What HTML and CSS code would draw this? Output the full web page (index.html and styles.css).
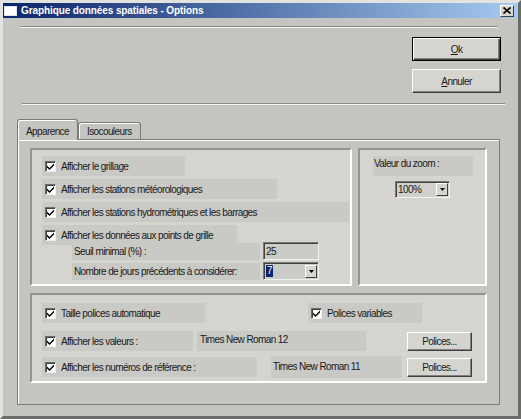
FILE: index.html
```html
<!DOCTYPE html>
<html lang="fr">
<head>
  <meta charset="UTF-8" />
  <title>Graphique données spatiales - Options</title>
  <link rel="stylesheet" href="styles.css">
</head>
<body>
  <div class="window">
    <div class="titlebar">
      <svg class="app-icon" width="13" height="10" viewBox="0 0 13 10">
        <rect x="0.5" y="0.5" width="12" height="9" fill="#fff" stroke="#dfe6f3"/>
      </svg>
      <span class="title">Graphique données spatiales - Options</span>
      <span class="close">
        <svg width="8" height="7" viewBox="0 0 8 7">
          <path d="M0.5 0.5 L7.5 6.5 M7.5 0.5 L0.5 6.5" stroke="#000" stroke-width="1.6"/>
        </svg>
      </span>
    </div>

    <div class="content">
      <div class="groove groove-top"></div>

      <div class="actions">
        <button class="btn btn-default"><u>O</u>k</button>
        <button class="btn"><u>A</u>nnuler</button>
      </div>

      <div class="groove groove-bottom"></div>

      <div class="tabs">
        <div class="tab active">Apparence</div>
        <div class="tab">Isocouleurs</div>
      </div>

      <div class="tab-panel">
        <div class="top-row">
          <div class="group group-display">
            <div class="check w-143"><span class="box"><svg viewBox="0 0 7 7"><polygon points="0,2.5 2.5,5 7,0.5 7,2.5 2.5,7 0,4.5"/></svg></span>Afficher le grillage</div>
            <div class="check w-235"><span class="box"><svg viewBox="0 0 7 7"><polygon points="0,2.5 2.5,5 7,0.5 7,2.5 2.5,7 0,4.5"/></svg></span>Afficher les stations météorologiques</div>
            <div class="check w-307"><span class="box"><svg viewBox="0 0 7 7"><polygon points="0,2.5 2.5,5 7,0.5 7,2.5 2.5,7 0,4.5"/></svg></span>Afficher les stations hydrométriques et les barrages</div>
            <div class="check w-195"><span class="box"><svg viewBox="0 0 7 7"><polygon points="0,2.5 2.5,5 7,0.5 7,2.5 2.5,7 0,4.5"/></svg></span>Afficher les données aux points de grille</div>

            <div class="fields">
              <span class="field-label">Seuil minimal (%) :</span>
              <span class="textbox">25</span>
              <span class="field-label">Nombre de jours précédents à considérer:</span>
              <span class="combo combo-days"><span class="selected">7</span><span class="drop"></span></span>
            </div>
          </div>

          <div class="group group-zoom">
            <div class="label-box">Valeur du zoom :</div>
            <span class="combo combo-zoom"><span class="value">100%</span><span class="drop"></span></span>
          </div>
        </div>

        <div class="group group-fonts">
          <div class="font-row row-1">
            <div class="check w-163"><span class="box"><svg viewBox="0 0 7 7"><polygon points="0,2.5 2.5,5 7,0.5 7,2.5 2.5,7 0,4.5"/></svg></span>Taille polices automatique</div>
            <div class="check w-114 push-103"><span class="box"><svg viewBox="0 0 7 7"><polygon points="0,2.5 2.5,5 7,0.5 7,2.5 2.5,7 0,4.5"/></svg></span>Polices variables</div>
          </div>
          <div class="font-row row-2">
            <div class="check w-151"><span class="box"><svg viewBox="0 0 7 7"><polygon points="0,2.5 2.5,5 7,0.5 7,2.5 2.5,7 0,4.5"/></svg></span>Afficher les valeurs :</div>
            <div class="font-name fn-values">Times New Roman 12</div>
            <button class="btn btn-small">Polices...</button>
          </div>
          <div class="font-row row-3">
            <div class="check w-215"><span class="box"><svg viewBox="0 0 7 7"><polygon points="0,2.5 2.5,5 7,0.5 7,2.5 2.5,7 0,4.5"/></svg></span>Afficher les numéros de référence :</div>
            <div class="font-name fn-refs">Times New Roman 11</div>
            <button class="btn btn-small">Polices...</button>
          </div>
        </div>
      </div>
    </div>
  </div>
</body>
</html>
```

FILE: styles.css
```css
:root {
  --bg: #c4c4c0;
  --face: #d6d4cf;
  --label: #c9c9c5;
  --shadow: #808080;
  --dark: #404040;
  --light: #ffffff;
}

body {
  margin: 0;
  font-family: "Liberation Sans", Arial, sans-serif;
  font-size: 10px;
  letter-spacing: -0.6px;
  color: #1a1a1a;
  background: var(--bg);
}

.window {
  box-sizing: border-box;
  width: 521px;
  height: 419px;
  background: var(--bg);
  border: 3px solid;
  border-color: #e2e2de #6a6a68 #6a6a68 #e2e2de;
}

/* title bar */
.titlebar {
  display: flex;
  align-items: center;
  height: 15px;
  background: linear-gradient(to right, #0a246a, #a6caf0);
}

.app-icon {
  margin-left: 1px;
  flex: none;
}

.title {
  flex: 1;
  margin-left: 4px;
  color: #fff;
  font-weight: bold;
  font-size: 10px;
  letter-spacing: -0.1px;
  white-space: nowrap;
}

.close {
  display: flex;
  align-items: center;
  justify-content: center;
  box-sizing: border-box;
  width: 14px;
  height: 12px;
  margin-right: 4px;
  background: var(--face);
  border: 1px solid;
  border-color: var(--light) var(--dark) var(--dark) var(--light);
}

/* separators and main buttons */
.groove {
  height: 0;
  border-top: 1px solid #8a8a86;
  border-bottom: 1px solid #f4f4f2;
}

.groove-top {
  margin: 8px 0 0 17px;
  width: 478px;
}

.groove-bottom {
  margin: 10px 0 0 19px;
  width: 483px;
}

.actions {
  display: flex;
  flex-direction: column;
  gap: 8px;
  margin: 9px 0 0 409px;
}

.btn {
  box-sizing: border-box;
  width: 89px;
  height: 24px;
  padding: 0;
  font: inherit;
  letter-spacing: inherit;
  color: #1a1a1a;
  background: var(--face);
  border: 1px solid;
  border-color: var(--light) var(--dark) var(--dark) var(--light);
  box-shadow: inset -1px -1px var(--shadow);
}

.btn-default {
  border: 1px solid #000;
  box-shadow: inset 1px 1px var(--light), inset -1px -1px var(--dark), inset -2px -2px var(--shadow);
}

.btn u {
  text-underline-offset: 1px;
}

/* tabs */
.tabs {
  display: flex;
  align-items: flex-end;
  height: 20px;
  margin: 14px 0 0 14px;
}

.tab {
  box-sizing: border-box;
  height: 17px;
  padding: 2px 8px 0 8px;
  background: var(--bg);
  border: 1px solid #7a7a7a;
  border-bottom: none;
  border-radius: 3px 3px 0 0;
  box-shadow: inset 1px 1px var(--light);
  line-height: 13px;
}

.tab.active {
  position: relative;
  z-index: 1;
  width: 61px;
  height: 21px;
  margin-bottom: -1px;
  padding: 5px 0 0 8px;
}

.tab-panel {
  box-sizing: border-box;
  width: 483px;
  height: 266px;
  margin-left: 14px;
  padding: 8px 12px;
  border: 1px solid #7a7a7a;
  box-shadow: inset 1px 1px var(--light);
}

.top-row {
  display: flex;
  gap: 6px;
}

/* sunken group boxes */
.group {
  box-sizing: border-box;
  background: var(--face);
  border: 2px solid;
  border-color: #939390 var(--light) var(--light) #939390;
}

.group-display {
  width: 322px;
  height: 138px;
  padding: 3px 0 0 10px;
}

.group-zoom {
  width: 129px;
  height: 138px;
  padding: 6px 0 0 13px;
}

.group-fonts {
  width: 457px;
  height: 90px;
  margin-top: 7px;
  padding: 0 0 0 10px;
}

.check {
  box-sizing: border-box;
  display: flex;
  align-items: center;
  height: 20px;
  margin-top: 3px;
  padding-left: 3px;
  background: var(--label);
  white-space: nowrap;
}

.box {
  display: flex;
  align-items: center;
  justify-content: center;
  flex: none;
  box-sizing: border-box;
  width: 11px;
  height: 11px;
  margin-right: 5px;
  background: #fff;
  border: 1px solid;
  border-color: #6c6c6c #f0f0f0 #f0f0f0 #6c6c6c;
  box-shadow: inset 1px 1px #404040;
}

.box svg {
  width: 7px;
  height: 7px;
  fill: #000;
}

.w-143 { width: 143px; }
.w-235 { width: 235px; }
.w-307 { width: 307px; }
.w-195 { width: 195px; }
.w-163 { width: 163px; }
.w-114 { width: 114px; }
.w-151 { width: 151px; }
.w-215 { width: 215px; }
.push-103 { margin-left: 103px; }

.fields {
  display: grid;
  grid-template-columns: 188px 56px;
  column-gap: 3px;
  row-gap: 2px;
  align-items: end;
  margin: -3px 0 0 30px;
}

.field-label {
  height: 17px;
  padding-left: 2px;
  line-height: 17px;
  background: var(--label);
  white-space: nowrap;
}

.textbox,
.combo {
  box-sizing: border-box;
  display: flex;
  align-items: center;
  height: 18px;
  padding-left: 2px;
  background: #cbcbc7;
  border: 1px solid;
  border-color: #7a7a7a #f2f2f0 #f2f2f0 #7a7a7a;
  box-shadow: inset 1px 1px #404040;
}

.combo {
  justify-content: space-between;
  padding-right: 1px;
}

.combo .selected {
  padding: 0 1px;
  line-height: 12px;
  color: #fff;
  background: #0a246a;
}

.combo-zoom {
  width: 55px;
  height: 17px;
  margin: 5px 0 0 22px;
  background: #d1d0cc;
}

.drop {
  box-sizing: border-box;
  width: 12px;
  height: 13px;
  background: var(--face) no-repeat center / 5px 3px;
  background-image: url("data:image/svg+xml,%3Csvg xmlns='http://www.w3.org/2000/svg' viewBox='0 0 5 3'%3E%3Cpolygon points='0,0 5,0 2.5,3' fill='%23000'/%3E%3C/svg%3E");
  border: 1px solid;
  border-color: var(--light) var(--dark) var(--dark) var(--light);
}

.label-box {
  box-sizing: border-box;
  width: 100px;
  height: 20px;
  padding-left: 1px;
  line-height: 16px;
  background: var(--label);
}

.font-row {
  display: flex;
  align-items: center;
}

.font-row .check {
  margin-top: 0;
}

.row-1 { margin-top: 8px; }
.row-2 { margin-top: 8px; }
.row-3 { margin-top: 5px; }

.font-name {
  box-sizing: border-box;
  height: 20px;
  line-height: 20px;
  background: var(--label);
  white-space: nowrap;
}

.fn-values {
  width: 169px;
  margin-left: 4px;
  padding-left: 3px;
  line-height: 17px;
}

.fn-refs {
  width: 131px;
  height: 22px;
  line-height: 22px;
  margin-left: 14px;
  padding-left: 2px;
}

.btn-small {
  width: 65px;
  height: 19px;
  margin-left: 5px;
}

.fn-values + .btn-small {
  margin-left: 41px;
}
```
